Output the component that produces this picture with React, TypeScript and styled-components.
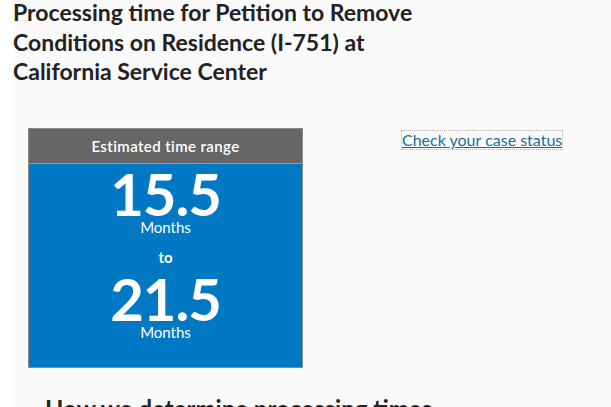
import React from 'react';
import styled, { createGlobalStyle } from 'styled-components';

const GlobalStyle = createGlobalStyle`
  body {
    margin: 0;
    background: #fff;
    font-family: Lato, "Open Sans", Arial, sans-serif;
    overflow: hidden;
  }
`;

const Panel = styled.main`
  margin-left: 13px;
  min-height: 100vh;
  background: #fafafa;
`;

const Title = styled.h1`
  margin: -2px 0 0;
  font-size: 23px;
  font-weight: 700;
  line-height: 29.5px;
  color: #222;
  max-width: 425px;
`;

const Row = styled.div`
  display: flex;
  align-items: flex-start;
  margin-top: 41px;
  padding-left: 15px;
`;

const RangeBox = styled.section`
  width: 273px;
  border: 1px solid #8a8a8a;
  background: #0078c4;
  color: #fff;
`;

const BoxHeader = styled.div`
  height: 34px;
  display: flex;
  align-items: center;
  justify-content: center;
  background: #666;
  border-bottom: 1px solid #9a9a9a;
  font-size: 15px;
  font-weight: 600;
  letter-spacing: 0.4px;
`;

const BoxBody = styled.div`
  display: flex;
  flex-direction: column;
  align-items: center;
  padding: 5px 0 26px;
`;

const Amount = styled.div`
  font-size: 58px;
  font-weight: 700;
  line-height: 50px;
  letter-spacing: -1px;
`;

const Unit = styled.div`
  font-size: 15px;
  line-height: 17px;
`;

const Between = styled.div`
  font-size: 15px;
  font-weight: 700;
  line-height: 17px;
  margin: 13px 0 8px;
`;

const StatusLink = styled.a`
  margin-left: 99px;
  margin-top: 3px;
  font-size: 16px;
  color: #1a6e9e;
  text-decoration: underline;
  outline: 1px dotted #b5b5b5;
  line-height: 18px;
`;

const NextHeading = styled.h2`
  margin: 26px 0 0 32px;
  font-size: 24px;
  font-weight: 700;
  color: #222;
`;

export default function App() {
  return (
    <>
      <GlobalStyle />
      <Panel>
        <Title>
          Processing time for Petition to Remove Conditions on Residence (I-751) at California Service
          Center
        </Title>
        <Row>
          <RangeBox>
            <BoxHeader>Estimated time range</BoxHeader>
            <BoxBody>
              <Amount>15.5</Amount>
              <Unit>Months</Unit>
              <Between>to</Between>
              <Amount>21.5</Amount>
              <Unit>Months</Unit>
            </BoxBody>
          </RangeBox>
          <StatusLink href="#">Check your case status</StatusLink>
        </Row>
        <NextHeading>How we determine processing times</NextHeading>
      </Panel>
    </>
  );
}
